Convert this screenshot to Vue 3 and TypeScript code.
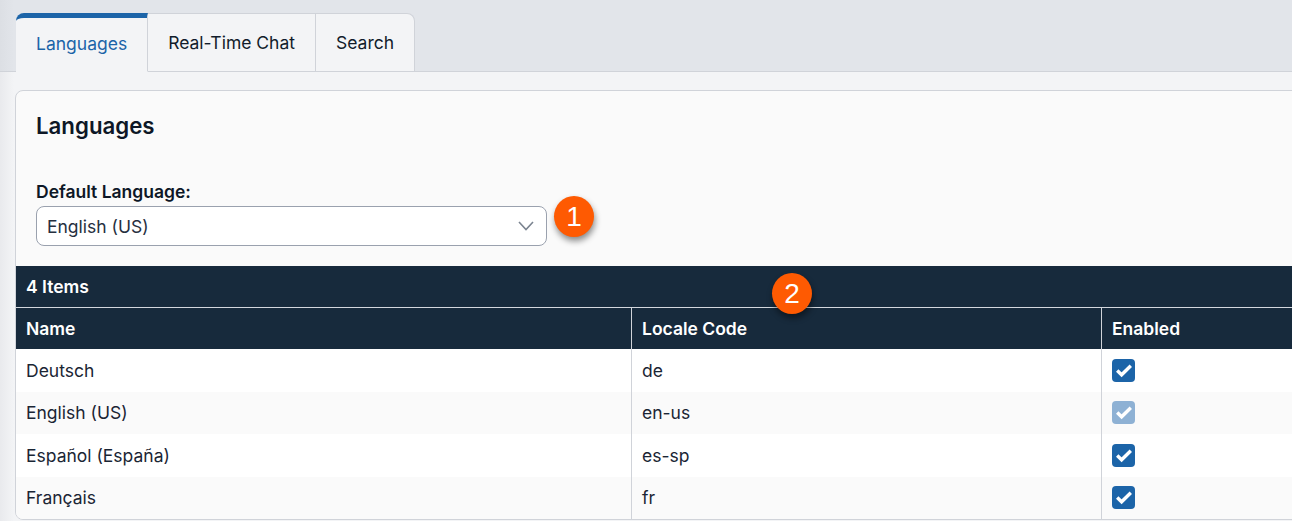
<script setup lang="ts">
interface Row { name: string; code: string; locked?: boolean }
const tabs = ['Languages', 'Real-Time Chat', 'Search']
const rows: Row[] = [
  { name: 'Deutsch', code: 'de' },
  { name: 'English (US)', code: 'en-us', locked: true },
  { name: 'Español (España)', code: 'es-sp' },
  { name: 'Français', code: 'fr' },
]
</script>

<template>
  <div class="page">
    <nav class="tabbar">
      <div class="tabs">
        <div v-for="(t, i) in tabs" :key="t" class="tab" :class="{ active: i === 0 }">{{ t }}</div>
      </div>
    </nav>
    <main class="content">
      <section class="panel">
        <h1 class="title">Languages</h1>
        <div class="field">
          <label class="label">Default Language:</label>
          <div class="select">
            <span>English (US)</span>
            <svg class="chevron" width="16" height="16" viewBox="0 0 16 16" fill="none">
              <path d="M1 4l7 7.500 7-7.500" stroke="#7b8490" stroke-width="1.600" />
            </svg>
          </div>
          <span class="badge badge-one">1</span>
        </div>
        <div class="grid">
          <div class="count">4 Items</div>
          <div class="row head">
            <div class="cell">Name</div>
            <div class="cell">Locale Code</div>
            <div class="cell">Enabled</div>
          </div>
          <div v-for="r in rows" :key="r.code" class="row body">
            <div class="cell">{{ r.name }}</div>
            <div class="cell">{{ r.code }}</div>
            <div class="cell">
              <span class="check" :class="{ locked: r.locked }">
                <svg width="18" height="15" viewBox="0 0 18 15" fill="none">
                  <path d="M2.200 7.600l4.400 4.200 9.200-9" stroke="#fff" stroke-width="3.400" />
                </svg>
              </span>
            </div>
          </div>
          <span class="badge badge-two">2</span>
        </div>
      </section>
    </main>
  </div>
</template>

<style>
html, body { margin: 0; overflow: hidden; }
</style>

<style scoped>
.page {
  width: 1292px;
  height: 521px;
  overflow: hidden;
  font-family: Inter, "Noto Sans", sans-serif;
  font-size: 17.500px;
  color: #111c2b;
  background: #f3f4f6;
}
.tabbar {
  box-sizing: border-box;
  height: 72px;
  padding: 13px 0 0 16px;
  background: linear-gradient(90deg, #dcdfe4 0, #e2e5ea 14px);
  border-bottom: 1px solid #d0d3d9;
}
.tabs { display: flex; height: 59px; }
.tab {
  box-sizing: border-box;
  height: 59px;
  padding: 0 20px;
  display: flex;
  align-items: center;
  background: #f3f4f6;
  border: 1px solid #d0d3d9;
  border-left: 0;
}
.tab:last-child { border-top-right-radius: 8px; }
.tab.active {
  color: #1c64a8;
  border-top: 5px solid #1c64a8;
  border-bottom-color: #f3f4f6;
  border-top-left-radius: 8px;
  padding-bottom: 2px;
}
.content {
  padding: 18px 0 0 15px;
  background: linear-gradient(90deg, #e9eaed 0, #f3f4f6 14px);
  height: 449px;
  box-sizing: border-box;
}
.panel {
  box-sizing: border-box;
  width: 1290px;
  height: 430px;
  background: #fafafa;
  border: 1px solid #d0d3d9;
  border-radius: 8px;
  overflow: hidden;
}
.title {
  margin: 0;
  padding: 22px 20px 0;
  font-size: 22.250px;
  line-height: 26px;
  font-weight: 600;
  color: #0d1726;
}
.field {
  position: relative;
  padding: 41px 20px 0;
}
.label {
  display: block;
  font-weight: 600;
  line-height: 24px;
  color: #0d1726;
}
.select {
  box-sizing: border-box;
  width: 511px;
  height: 40px;
  margin-top: 2px;
  padding: 0 12px 0 10px;
  display: flex;
  align-items: center;
  justify-content: space-between;
  background: #fff;
  border: 1px solid #9aa1ae;
  border-radius: 8px;
  color: #26303f;
}
.badge {
  position: absolute;
  width: 40px;
  height: 41px;
  border-radius: 50%;
  background: #fe5a02;
  color: #fff;
  font-family: "Liberation Sans", Arial, sans-serif;
  font-size: 28px;
  line-height: 42px;
  text-align: center;
  box-shadow: 1px 4px 6px rgba(0, 0, 0, 0.45);
}
.badge-one { left: 538px; top: 57px; }
.badge-two { left: 756px; top: 7px; }
.grid {
  position: relative;
  margin-top: 20px;
  border-bottom: 2px solid #d0d3d9;
}
.count {
  box-sizing: border-box;
  height: 42px;
  padding: 0 10px;
  display: flex;
  align-items: center;
  background: #172a3c;
  color: #fff;
  font-weight: 600;
  border-bottom: 1px solid #d3d7dd;
}
.row {
  display: grid;
  grid-template-columns: 615px 470px 1fr;
}
.head { height: 41px; background: #172a3c; color: #fff; font-weight: 600; }
.body { height: 42.500px; background: #fff; color: #1a2534; }
.body:nth-child(even) { background: #fafafa; }
.cell {
  box-sizing: border-box;
  padding: 0 10px;
  display: flex;
  align-items: center;
}
.cell + .cell { border-left: 1px solid #d0d3d9; }
.check {
  width: 23px;
  height: 23px;
  border-radius: 4px;
  background: #1c64a8;
  display: flex;
  align-items: center;
  justify-content: center;
}
.check.locked { background: #8eb1d4; }
</style>
